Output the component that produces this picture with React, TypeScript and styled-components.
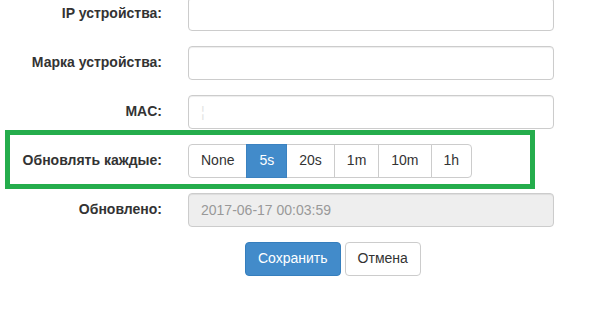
import React from 'react';
import styled, { createGlobalStyle, css } from 'styled-components';

const GlobalStyle = createGlobalStyle`
  html, body {
    margin: 0;
    padding: 0;
    background: #fff;
  }
  body {
    font-family: "Liberation Sans", Arial, sans-serif;
    font-size: 14px;
    line-height: 1.42857;
    color: #333;
    overflow: hidden;
  }
  * {
    box-sizing: border-box;
  }
`;

const Form = styled.form`
  margin-top: -3px;
  width: 597px;
`;

const FormGroup = styled.div<{ $highlight?: boolean }>`
  position: relative;
  display: grid;
  grid-template-columns: 162px 366px;
  column-gap: 26px;
  margin-bottom: 15px;

  ${(p) =>
    p.$highlight &&
    css`
      &::after {
        content: '';
        position: absolute;
        top: -14px;
        bottom: -11px;
        left: 5px;
        width: 520px;
        border: 5px solid #25ad4c;
        pointer-events: none;
      }
    `}
`;

const Label = styled.label`
  padding-top: 7px;
  text-align: right;
  font-weight: bold;
  color: #333;
`;

const Input = styled.input`
  display: block;
  width: 100%;
  height: 34px;
  padding: 6px 12px;
  font-family: inherit;
  font-size: 14px;
  line-height: 1.42857;
  color: #555;
  background: #fff;
  border: 1px solid #ccc;
  border-radius: 4px;
  box-shadow: inset 0 1px 1px rgba(0, 0, 0, 0.075);
  outline: none;

  &::placeholder {
    color: #e4e4e4;
  }

  &:disabled {
    background: #eee;
    color: #999;
    cursor: not-allowed;
  }
`;

const BtnGroup = styled.div`
  display: flex;
`;

const GroupButton = styled.button<{ $active?: boolean }>`
  height: 34px;
  padding: 6px 12px;
  font-family: inherit;
  font-size: 14px;
  line-height: 1.42857;
  color: #333;
  background: #fff;
  border: 1px solid #ccc;
  margin-left: -1px;
  border-radius: 0;
  cursor: pointer;

  &:first-child {
    margin-left: 0;
    border-radius: 4px 0 0 4px;
  }
  &:last-child {
    border-radius: 0 4px 4px 0;
  }

  ${(p) =>
    p.$active &&
    css`
      position: relative;
      z-index: 1;
      color: #fff;
      background: #428bca;
      border-color: #3b82c0;
    `}
`;

const Actions = styled.div`
  display: flex;
  gap: 4px;
  padding-left: 245px;
`;

const Button = styled.button<{ $primary?: boolean }>`
  height: 34px;
  padding: 6px 12px;
  font-family: inherit;
  font-size: 14px;
  line-height: 1.42857;
  border-radius: 4px;
  border: 1px solid #ccc;
  background: #fff;
  color: #333;
  cursor: pointer;

  ${(p) =>
    p.$primary &&
    css`
      color: #fff;
      background: #428bca;
      border-color: #357ebd;
    `}
`;

const intervals = ['None', '5s', '20s', '1m', '10m', '1h'];

const App: React.FC = () => {
  return (
    <>
      <GlobalStyle />
      <Form onSubmit={(e) => e.preventDefault()}>
        <FormGroup>
          <Label>IP устройства:</Label>
          <Input type="text" />
        </FormGroup>
        <FormGroup>
          <Label>Марка устройства:</Label>
          <Input type="text" />
        </FormGroup>
        <FormGroup>
          <Label>MAC:</Label>
          <Input type="text" placeholder="¦" />
        </FormGroup>
        <FormGroup $highlight>
          <Label>Обновлять каждые:</Label>
          <BtnGroup>
            {intervals.map((v) => (
              <GroupButton key={v} type="button" $active={v === '5s'}>
                {v}
              </GroupButton>
            ))}
          </BtnGroup>
        </FormGroup>
        <FormGroup>
          <Label>Обновлено:</Label>
          <Input type="text" disabled value="2017-06-17 00:03:59" readOnly />
        </FormGroup>
        <Actions>
          <Button type="submit" $primary>Сохранить</Button>
          <Button type="button">Отмена</Button>
        </Actions>
      </Form>
    </>
  );
};

export default App;
